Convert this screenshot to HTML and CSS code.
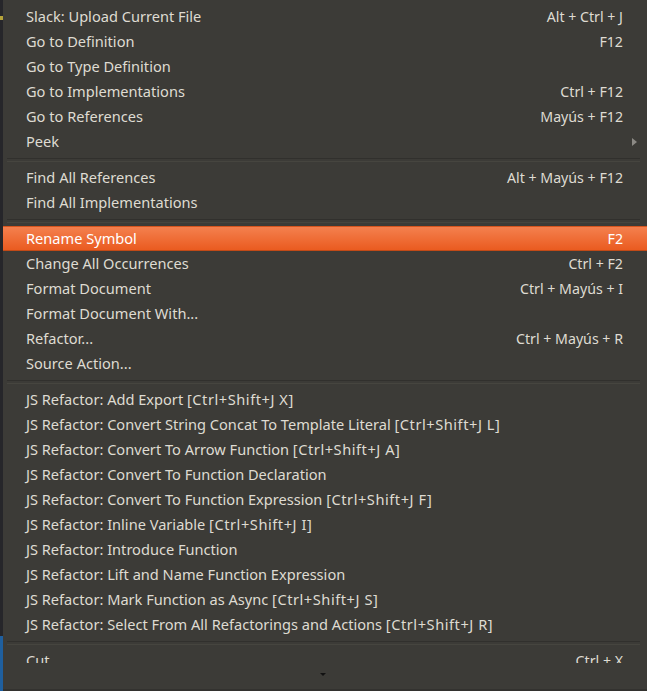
FILE: index.html
```html
<!DOCTYPE html>
<html>
<head>
<meta charset="utf-8">
<link rel="stylesheet" href="styles.css">
</head>
<body>
<div class="screen">
  <div class="editor-strip">
    <span class="mark mark-yellow"></span>
    <span class="mark mark-blue"></span>
  </div>
  <div class="menu">
    <div class="items">
      <div class="item"><span>Slack: Upload Current File</span><span class="key">Alt + Ctrl + J</span></div>
      <div class="item"><span>Go to Definition</span><span class="key">F12</span></div>
      <div class="item"><span>Go to Type Definition</span></div>
      <div class="item"><span>Go to Implementations</span><span class="key">Ctrl + F12</span></div>
      <div class="item"><span>Go to References</span><span class="key">Mayús + F12</span></div>
      <div class="item submenu"><span>Peek</span><span class="arrow"></span></div>
      <div class="sep"></div>
      <div class="item"><span>Find All References</span><span class="key">Alt + Mayús + F12</span></div>
      <div class="item"><span>Find All Implementations</span></div>
      <div class="sep"></div>
      <div class="item active"><span>Rename Symbol</span><span class="key">F2</span></div>
      <div class="item"><span>Change All Occurrences</span><span class="key">Ctrl + F2</span></div>
      <div class="item"><span>Format Document</span><span class="key">Ctrl + Mayús + I</span></div>
      <div class="item"><span>Format Document With...</span></div>
      <div class="item"><span>Refactor...</span><span class="key">Ctrl + Mayús + R</span></div>
      <div class="item"><span>Source Action...</span></div>
      <div class="sep"></div>
      <div class="item"><span>JS Refactor: Add Export <span class="hint">[Ctrl+Shift+J X]</span></span></div>
      <div class="item"><span>JS Refactor: Convert String Concat To Template Literal <span class="hint">[Ctrl+Shift+J L]</span></span></div>
      <div class="item"><span>JS Refactor: Convert To Arrow Function <span class="hint">[Ctrl+Shift+J A]</span></span></div>
      <div class="item"><span>JS Refactor: Convert To Function Declaration</span></div>
      <div class="item"><span>JS Refactor: Convert To Function Expression <span class="hint">[Ctrl+Shift+J F]</span></span></div>
      <div class="item"><span>JS Refactor: Inline Variable <span class="hint">[Ctrl+Shift+J I]</span></span></div>
      <div class="item"><span>JS Refactor: Introduce Function</span></div>
      <div class="item"><span>JS Refactor: Lift and Name Function Expression</span></div>
      <div class="item"><span>JS Refactor: Mark Function as Async <span class="hint">[Ctrl+Shift+J S]</span></span></div>
      <div class="item"><span>JS Refactor: Select From All Refactorings and Actions <span class="hint">[Ctrl+Shift+J R]</span></span></div>
      <div class="sep"></div>
      <div class="item"><span>Cut</span><span class="key">Ctrl + X</span></div>
    </div>
    <div class="scroller"><span class="down"></span></div>
  </div>
</div>
</body>
</html>
```
FILE: styles.css
```css
* { box-sizing: border-box; }
html, body {
  margin: 0;
  padding: 0;
  background: #3c3b37;
}
body {
  width: 647px;
  height: 691px;
  overflow: hidden;
  font-family: "Noto Sans", "Open Sans", sans-serif;
  font-size: 14.6px;
  color: #dfdbd2;
}
.screen {
  display: flex;
  height: 691px;
}
.editor-strip {
  width: 3px;
  flex: none;
  background: #26262a;
  display: flex;
  flex-direction: column;
}
.mark {
  display: block;
  width: 3px;
}
.mark-yellow {
  height: 4px;
  margin-top: 16px;
  background: #b5a33a;
}
.mark-blue {
  height: 55px;
  margin-top: auto;
  background: #1f5f9e;
}
.menu {
  flex: 1;
  display: flex;
  flex-direction: column;
  background: #3c3b37;
  border-bottom: 2px solid #33322f;
}
.items {
  height: 663px;
  overflow: hidden;
  padding-top: 4px;
}
.item {
  height: 25px;
  display: flex;
  align-items: center;
  justify-content: space-between;
  padding: 0 24px 0 23px;
  white-space: nowrap;
  line-height: 25px;
}
.key {
  font-size: 14.2px;
}
.hint {
  letter-spacing: 0.55px;
}
.item.active {
  background: linear-gradient(#f4804e, #ea5b20);
  border-top: 1px solid #d5551f;
  border-bottom: 1px solid #c24a17;
  color: #ffffff;
}
.submenu {
  padding-right: 10px;
}
.arrow {
  width: 0;
  height: 0;
  border-top: 4px solid transparent;
  border-bottom: 4px solid transparent;
  border-left: 5px solid #8c8a85;
}
.sep {
  height: 11px;
  display: flex;
  align-items: center;
  padding: 0 7px 0 4px;
}
.sep::before {
  content: "";
  display: block;
  width: 100%;
  height: 2px;
  border-top: 1px solid #31302d;
  border-bottom: 1px solid #46453f;
}
.scroller {
  flex: 1;
  display: flex;
  align-items: center;
  justify-content: center;
  padding-right: 4px;
}
.down {
  width: 0;
  height: 0;
  border-left: 3px solid transparent;
  border-right: 3px solid transparent;
  border-top: 3px solid #111111;
  margin-bottom: 4px;
}
```
